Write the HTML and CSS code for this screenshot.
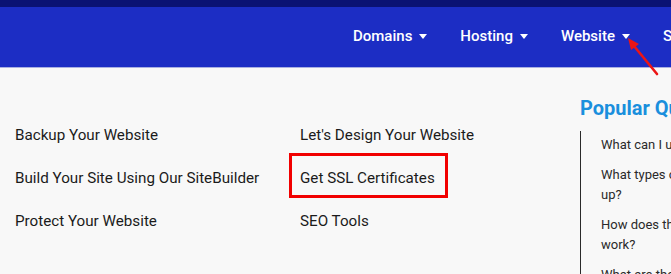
FILE: index.html
```html
<!DOCTYPE html>
<html lang="en">
<head>
    <meta charset="UTF-8">
    <meta name="viewport" content="width=device-width, initial-scale=1.0">
    <title>Website</title>
    <link rel="stylesheet" href="styles.css">
</head>
<body>

<header class="site-header">
    <div class="top-strip"></div>
    <nav class="main-nav">
        <a href="#" class="nav-item">Domains</a>
        <a href="#" class="nav-item">Hosting</a>
        <a href="#" class="nav-item">Website</a>
        <a href="#" class="nav-item">Security</a>
        <a href="#" class="nav-item">Email</a>
    </nav>
    <!-- annotation arrow pointing at the Website caret -->
    <svg class="pointer" xmlns="http://www.w3.org/2000/svg" viewBox="0 0 50 50" width="50" height="50">
        <line x1="37" y1="40" x2="14" y2="12" stroke="#ec1515" stroke-width="2.6" stroke-linecap="round"/>
        <polygon points="8,4 19,10 11,16" fill="#ec1515"/>
    </svg>
</header>

<main class="mega-menu">
    <ul class="menu-col">
        <li><a href="#">Backup Your Website</a></li>
        <li><a href="#">Build Your Site Using Our SiteBuilder</a></li>
        <li><a href="#">Protect Your Website</a></li>
    </ul>
    <ul class="menu-col">
        <li><a href="#">Let's Design Your Website</a></li>
        <li><a href="#" class="marked">Get SSL Certificates</a></li>
        <li><a href="#">SEO Tools</a></li>
    </ul>
    <aside class="popular">
        <h2>Popular Questions</h2>
        <ul class="faq-list">
            <li><a href="#">What can I use SiteBuilder for?</a></li>
            <li><a href="#">What types of websites can I set up?</a></li>
            <li><a href="#">How does the website builder work?</a></li>
            <li><a href="#">What are the benefits of SSL?</a></li>
        </ul>
    </aside>
</main>

</body>
</html>
```

FILE: styles.css
```css
* {
    margin: 0;
    padding: 0;
    box-sizing: border-box;
}
body {
    font-family: Roboto, "Liberation Sans", Arial, sans-serif;
    background-color: #f8f8f8;
    color: #1b1b1b;
    overflow: hidden;
    width: 671px;
}
a {
    color: inherit;
    text-decoration: none;
}
ul {
    list-style: none;
}
.site-header {
    position: relative;
}
.top-strip {
    height: 7px;
    background-color: #0a1273;
}
.main-nav {
    display: flex;
    align-items: center;
    gap: 33px;
    height: 61px;
    padding-left: 353px;
    padding-bottom: 2px;
    background-color: #1c2dc4;
    border-bottom: 1px solid #a9b0e2;
    white-space: nowrap;
}
.nav-item {
    display: flex;
    align-items: center;
    gap: 7px;
    color: #fff;
    font-size: 15px;
    font-weight: 500;
    flex-shrink: 0;
}
.nav-item::after {
    content: "";
    border-left: 4.5px solid transparent;
    border-right: 4.5px solid transparent;
    border-top: 5px solid #fff;
}
.pointer {
    position: absolute;
    left: 620px;
    top: 34px;
}
.mega-menu {
    display: grid;
    grid-template-columns: 285px 291px 220px;
    padding: 28px 0 0 4px;
}
.menu-col {
    padding-top: 14px;
}
.menu-col li {
    display: block;
    margin-bottom: -2px;
}
.menu-col a {
    display: inline-block;
    font-size: 15.2px;
    line-height: 18px;
    padding: 13px 10px 8px 8px;
    border: 3px solid transparent;
}
.menu-col a.marked {
    border-color: #f10000;
}
.popular h2 {
    font-size: 20px;
    line-height: 24px;
    font-weight: 700;
    color: #1a8fdd;
    white-space: nowrap;
}
.faq-list {
    margin-top: 11px;
    border-left: 1px solid #2a2a2a;
    padding: 4px 0 0 20px;
    height: 200px;
    width: 215px;
}
.faq-list li {
    font-size: 13px;
    line-height: 20px;
    color: #2a2a2a;
    margin-bottom: 10px;
}
```
